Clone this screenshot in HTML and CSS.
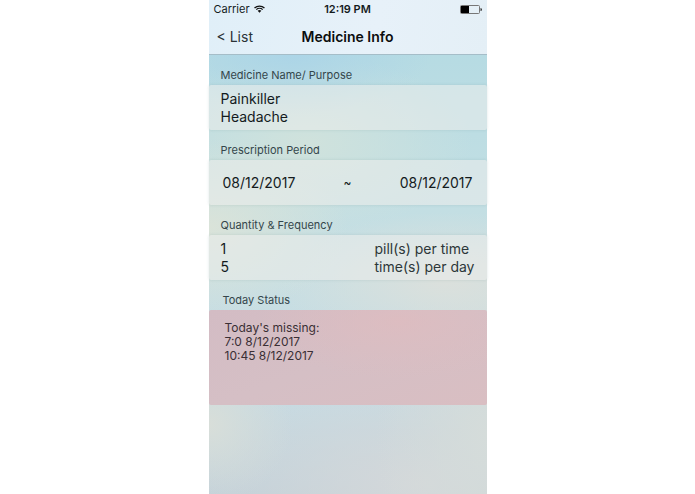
FILE: index.html
```html
<!DOCTYPE html>
<html lang="en">
    <head>
        <meta charset="utf-8">
        <meta name="viewport" content="width=device-width, initial-scale=1">
        <title>Medicine Info</title>
        <link rel="stylesheet" href="styles.css">
    </head>
    <body>
        <div class="screen">
            <header class="header">
                <div class="status-bar">
                    <span class="carrier">
                        Carrier
                        <svg class="wifi" viewBox="0 0 20 14" aria-hidden="true">
                            <path d="M1 5.2a13 13 0 0 1 18 0M4.2 8.2a8.4 8.4 0 0 1 11.6 0" fill="none" stroke="#111" stroke-width="2.3"/>
                            <path d="M6.6 10.4a5 5 0 0 1 6.8 0L10 14z" fill="#111"/>
                        </svg>
                    </span>
                    <span class="clock">12:19 PM</span>
                    <svg class="battery" viewBox="0 0 22 9" aria-hidden="true">
                        <rect x="0.5" y="0.5" width="19" height="8" rx="1" fill="none" stroke="#777"/>
                        <rect x="1" y="1" width="8" height="7" fill="#000"/>
                        <path d="M20.5 3a1.5 1.5 0 0 1 0 3z" fill="#333"/>
                    </svg>
                </div>
                <nav class="nav-bar">
                    <a class="back" href="#">&lt; List</a>
                    <h1>Medicine Info</h1>
                </nav>
            </header>

            <main>
                <section>
                    <h2>Medicine Name/ Purpose</h2>
                    <div class="card">
                        <p>Painkiller</p>
                        <p>Headache</p>
                    </div>
                </section>

                <section>
                    <h2>Prescription Period</h2>
                    <div class="card period">
                        <span>08/12/2017</span>
                        <span class="tilde">~</span>
                        <span>08/12/2017</span>
                    </div>
                </section>

                <section>
                    <h2>Quantity &amp; Frequency</h2>
                    <div class="card quantity">
                        <span>1</span>
                        <span class="unit">pill(s) per time</span>
                        <span>5</span>
                        <span class="unit">time(s) per day</span>
                    </div>
                </section>

                <section class="today">
                    <h2>Today Status</h2>
                    <div class="missing">
                        <p>Today's missing:</p>
                        <p>7:0 8/12/2017</p>
                        <p>10:45 8/12/2017</p>
                    </div>
                </section>
            </main>
        </div>
    </body>
</html>
```
FILE: styles.css
```css
* {
    box-sizing: border-box;
}

body {
    margin: 0;
    background: white;
    font-family: Inter, "Liberation Sans", sans-serif;
    color: #141b1d;
}

h1, h2, p {
    margin: 0;
}

/* SCREEN */
.screen {
    width: 40%;
    min-width: 278px;
    min-height: 100vh;
    margin: 0 auto;
    background:
        radial-gradient(ellipse 50% 12% at 30% 11%, #acd5e7, transparent),
        radial-gradient(ellipse 50% 18% at 0% 46%, #dae3d9, transparent),
        radial-gradient(ellipse 60% 18% at 35% 29%, #d0e2dc, transparent),
        radial-gradient(ellipse 60% 14% at 85% 57%, #dbe0dc, transparent),
        radial-gradient(ellipse 30% 16% at 0% 86%, #d8ded9, transparent),
        radial-gradient(ellipse 40% 40% at 100% 88%, #d5dcda, transparent),
        radial-gradient(ellipse 80% 24% at 75% 98%, #d4d8da, transparent),
        linear-gradient(#b6dbe3 10%, #c0dee3 35%, #c8dfe3 55%, #c6dae2 82%, #c3d1d9);
}

/* HEADER */
.header {
    background: linear-gradient(100deg, #e0eff8, #e7f1f9 60%, #e4eff6);
    border-bottom: 1px solid #a5bdc8;
}

.status-bar {
    display: grid;
    grid-template-columns: 1fr auto 1fr;
    align-items: center;
    height: 18px;
    padding: 0 5px;
    font-size: 11px;
}

.carrier {
    display: flex;
    align-items: center;
    gap: 4px;
}

.wifi {
    width: 11px;
    height: 8px;
}

.clock {
    font-weight: 600;
}

.battery {
    justify-self: end;
    width: 22px;
    height: 9px;
}

.nav-bar {
    display: grid;
    grid-template-columns: 1fr auto 1fr;
    align-items: center;
    height: 36px;
    padding: 0 8px;
}

.back {
    color: #2b3236;
    font-size: 14px;
    text-decoration: none;
}

h1 {
    color: #0b0d0e;
    font-size: 14px;
    font-weight: 600;
}

/* SECTIONS */
h2 {
    padding: 12px 12px 2px;
    color: #34464b;
    font-size: 11px;
    font-weight: 400;
    line-height: 16px;
}

.card {
    min-height: 45px;
    padding: 5px 12px 4px;
    background: rgba(235, 238, 236, .56);
    border-radius: 2px;
    box-shadow: 0 0 3px rgba(90, 130, 130, .22);
    font-size: 14px;
    line-height: 18px;
}

.period {
    display: flex;
    align-items: center;
    justify-content: space-between;
    padding: 0 14px;
}

.tilde {
    font-size: 12px;
}

.quantity {
    display: grid;
    grid-template-columns: 1fr auto;
}

.unit {
    color: #2d3739;
}

.today h2 {
    padding-left: 14px;
}

.missing {
    min-height: 95px;
    padding: 11px 16px;
    background:
        radial-gradient(ellipse 50% 60% at 68% 12%, rgba(224, 188, 191, .7), transparent),
        linear-gradient(160deg, #d3bcc4, #d5bfc5 50%, #d9bec2);
    border-radius: 2px;
    color: #3a2f35;
    font-size: 12px;
    line-height: 14px;
}
```
